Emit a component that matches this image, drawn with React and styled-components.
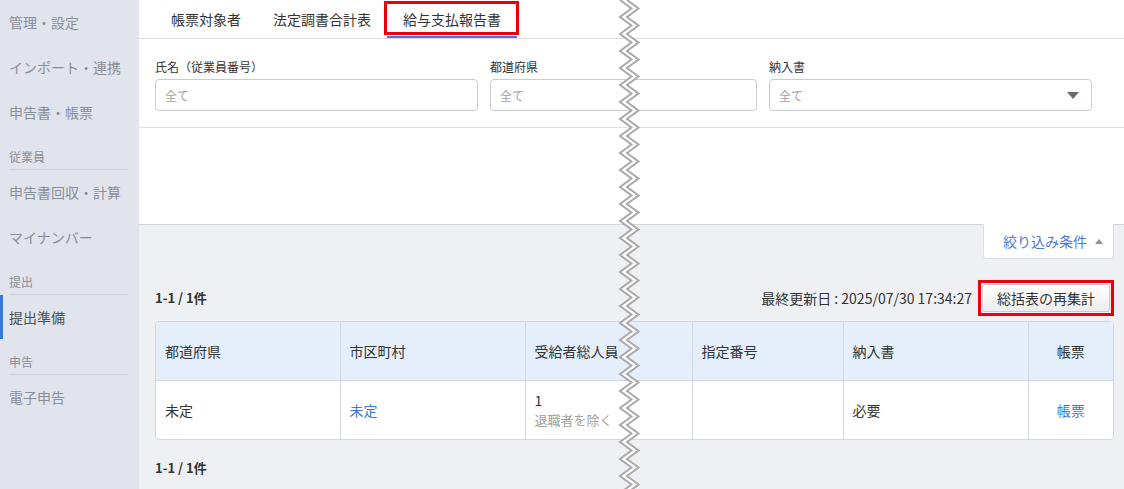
import styled, { createGlobalStyle } from "styled-components";

const GlobalStyle = createGlobalStyle`
  body {
    margin: 0;
    font-family: "Noto Sans CJK JP", "Noto Sans", sans-serif;
    color: #333;
    background: #eff0f4;
  }
`;

const Page = styled.div`
  position: relative;
  display: flex;
  width: 1124px;
  height: 489px;
  overflow: hidden;
`;

const Sidebar = styled.nav`
  width: 139px;
  flex-shrink: 0;
  background: #e1e4ec;
`;

const NavItem = styled.div`
  position: relative;
  height: 45px;
  box-sizing: border-box;
  display: flex;
  align-items: center;
  padding: 0 0 2px 9px;
  font-size: 14px;
  color: ${(p) => (p.$active ? "#4d4f55" : "#8b8e96")};
  &::before {
    content: "";
    display: ${(p) => (p.$active ? "block" : "none")};
    position: absolute;
    left: 0;
    top: 0;
    bottom: 1px;
    width: 3px;
    background: #3a78d8;
  }
`;

const SectionHeader = styled.div`
  margin: 0 11px 0 9px;
  padding: 15px 0 5px;
  font-size: 12px;
  line-height: 14px;
  color: #8b8e96;
  border-bottom: 1px solid #cfd2d9;
`;

const Main = styled.main`
  flex: 1;
  display: flex;
  flex-direction: column;
  background: #eff0f4;
`;

const TabBar = styled.div`
  display: flex;
  height: 39px;
  box-sizing: border-box;
  padding-left: 16px;
  background: #fff;
  border-bottom: 1px solid #d9dbe1;
`;

const Tab = styled.div`
  position: relative;
  padding: 0 16px;
  font-size: 14px;
  line-height: 38px;
  color: #333;
  box-shadow: ${(p) => (p.$active ? "inset 0 -2px 0 #3b78e7" : "none")};
  &::after {
    content: "";
    display: ${(p) => (p.$active ? "block" : "none")};
    position: absolute;
    left: -3px;
    right: -2px;
    top: 1px;
    bottom: 3px;
    border: 3px solid #e8000b;
  }
`;

const FilterPanel = styled.div`
  display: flex;
  gap: 12px;
  padding: 20px 16px 16px;
  background: #fff;
  border-bottom: 1px solid #dfe1e6;
`;

const Field = styled.div`
  width: ${(p) => p.$w}px;
  display: flex;
  flex-direction: column;
  gap: 4px;
`;

const Label = styled.label`
  font-size: 12px;
  line-height: 16px;
  color: #333;
`;

const Input = styled.div`
  position: relative;
  height: 32px;
  box-sizing: border-box;
  display: flex;
  align-items: center;
  padding-left: 9px;
  border: 1px solid #c9ccd3;
  border-radius: 4px;
  font-size: 12px;
  color: #a0a0a0;
  background: #fff;
`;

const Caret = styled.span`
  position: absolute;
  right: 12px;
  top: 12px;
  width: 0;
  height: 0;
  border-left: 6px solid transparent;
  border-right: 6px solid transparent;
  border-top: 7px solid #676b73;
`;

const BlankPane = styled.div`
  height: 96px;
  background: #fff;
  border-bottom: 1px solid #d3d6dc;
`;

const Content = styled.section`
  display: flex;
  flex-direction: column;
  padding: 0 11px 0 16px;
`;

const FilterToggle = styled.div`
  align-self: flex-end;
  width: 131px;
  height: 35px;
  box-sizing: border-box;
  display: flex;
  align-items: center;
  gap: 8px;
  padding-left: 19px;
  margin-top: -1px;
  background: #fff;
  border: 1px solid #dcdfe5;
  border-top: none;
  border-radius: 0 0 4px 4px;
  font-size: 14px;
  color: #4f7bd3;
`;

const UpCaret = styled.span`
  width: 0;
  height: 0;
  border-left: 4px solid transparent;
  border-right: 4px solid transparent;
  border-bottom: 5px solid #8d9098;
`;

const Toolbar = styled.div`
  display: flex;
  align-items: center;
  justify-content: space-between;
  height: 36px;
  margin-top: 21px;
`;

const Count = styled.div`
  font-size: 13px;
  font-weight: 700;
  color: #333;
  line-height: 16px;
`;

const Actions = styled.div`
  display: flex;
  align-items: center;
  gap: 6px;
`;

const Updated = styled.span`
  font-size: 14px;
  color: #333;
`;

const Highlight = styled.span`
  display: flex;
  padding: 1px;
  border: 3px solid #e8000b;
`;

const RecalcButton = styled.button`
  height: 28px;
  padding: 0 14px;
  font-family: inherit;
  font-size: 14px;
  color: #333;
  background: linear-gradient(#ffffff, #ededed);
  border: 1px solid #c6c9cf;
  border-radius: 3px;
`;

const TableWrap = styled.div`
  margin-top: 5px;
  border: 1px solid #d3d8e0;
  border-radius: 4px;
  overflow: hidden;
  background: #fff;
`;

const Table = styled.table`
  width: 100%;
  border-collapse: collapse;
  table-layout: fixed;
  font-size: 14px;
`;

const Th = styled.th`
  height: 58px;
  padding: 0 9px;
  background: #e5effb;
  font-weight: 400;
  color: #333;
  text-align: ${(p) => (p.$center ? "center" : "left")};
  border-right: 1px solid #d3d8e0;
  border-bottom: 1px solid #d3d8e0;
  &:last-child {
    border-right: none;
  }
`;

const Td = styled.td`
  height: 58px;
  padding: 0 9px;
  color: ${(p) => (p.$link ? "#3d7ad6" : "#333")};
  text-align: ${(p) => (p.$center ? "center" : "left")};
  border-right: 1px solid #d3d8e0;
  &:last-child {
    border-right: none;
  }
`;

const Sub = styled.div`
  font-size: 13px;
  line-height: 20px;
  color: #a0a0a0;
  white-space: nowrap;
`;

const Num = styled.div`
  line-height: 20px;
`;

const Footer = styled(Count)`
  margin-top: 20px;
`;

const Tear = styled.svg`
  position: absolute;
  left: 614px;
  top: 0;
  pointer-events: none;
`;

const TearLine = () => {
  const step = 8.5;
  const n = Math.ceil(489 / step) + 2;
  const left = [];
  const right = [];
  for (let i = 0; i < n; i++) {
    const x = i % 2 ? 17.5 : 6;
    left.push(`${x},${i * step}`);
    right.push(`${x + 7},${i * step}`);
  }
  return (
    <Tear width="30" height="489" viewBox="0 0 30 489">
      <polygon points={[...left, ...right.slice().reverse()].join(" ")} fill="#fff" />
      <polyline points={left.join(" ")} fill="none" stroke="#a9a9a9" strokeWidth="2" />
      <polyline points={right.join(" ")} fill="none" stroke="#a9a9a9" strokeWidth="2" />
    </Tear>
  );
};

const cols = [184, 185, 167, 151, 185, 85];

export default function App() {
  return (
    <Page>
      <GlobalStyle />
      <Sidebar>
        <NavItem>管理・設定</NavItem>
        <NavItem>インポート・連携</NavItem>
        <NavItem>申告書・帳票</NavItem>
        <SectionHeader>従業員</SectionHeader>
        <NavItem>申告書回収・計算</NavItem>
        <NavItem>マイナンバー</NavItem>
        <SectionHeader>提出</SectionHeader>
        <NavItem $active>提出準備</NavItem>
        <SectionHeader>申告</SectionHeader>
        <NavItem>電子申告</NavItem>
      </Sidebar>
      <Main>
        <TabBar>
          <Tab>帳票対象者</Tab>
          <Tab>法定調書合計表</Tab>
          <Tab $active>給与支払報告書</Tab>
        </TabBar>
        <FilterPanel>
          <Field $w={323}>
            <Label>氏名（従業員番号）</Label>
            <Input>全て</Input>
          </Field>
          <Field $w={267}>
            <Label>都道府県</Label>
            <Input>全て</Input>
          </Field>
          <Field $w={323}>
            <Label>納入書</Label>
            <Input>
              全て
              <Caret />
            </Input>
          </Field>
        </FilterPanel>
        <BlankPane />
        <Content>
          <FilterToggle>
            絞り込み条件
            <UpCaret />
          </FilterToggle>
          <Toolbar>
            <Count>1-1 / 1件</Count>
            <Actions>
              <Updated>最終更新日 : 2025/07/30 17:34:27</Updated>
              <Highlight>
                <RecalcButton>総括表の再集計</RecalcButton>
              </Highlight>
            </Actions>
          </Toolbar>
          <TableWrap>
            <Table>
              <colgroup>
                {cols.map((w, i) => (
                  <col key={i} style={{ width: w }} />
                ))}
              </colgroup>
              <thead>
                <tr>
                  <Th>都道府県</Th>
                  <Th>市区町村</Th>
                  <Th>受給者総人員</Th>
                  <Th>指定番号</Th>
                  <Th>納入書</Th>
                  <Th $center>帳票</Th>
                </tr>
              </thead>
              <tbody>
                <tr>
                  <Td>未定</Td>
                  <Td $link>未定</Td>
                  <Td>
                    <Num>1</Num>
                    <Sub>退職者を除く</Sub>
                  </Td>
                  <Td />
                  <Td>必要</Td>
                  <Td $link $center>帳票</Td>
                </tr>
              </tbody>
            </Table>
          </TableWrap>
          <Footer>1-1 / 1件</Footer>
        </Content>
      </Main>
      <TearLine />
    </Page>
  );
}
